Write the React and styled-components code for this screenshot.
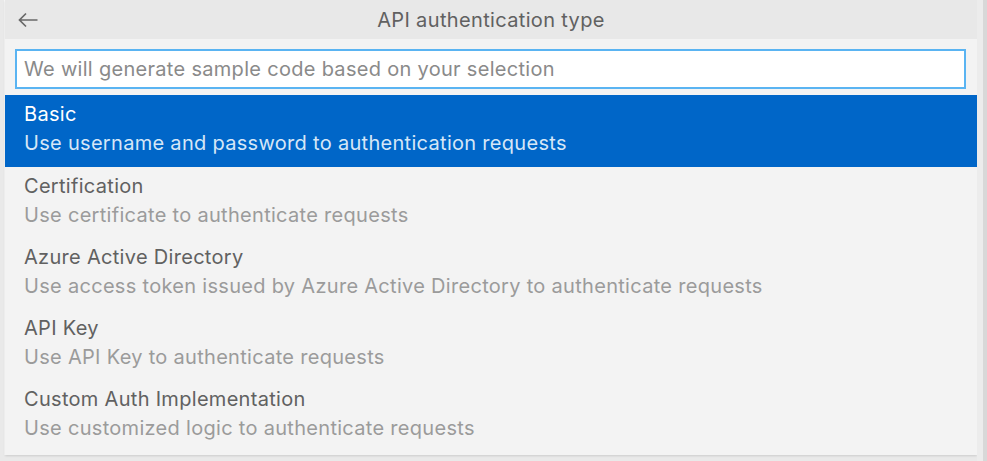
import React from "react";
import styled, { createGlobalStyle } from "styled-components";

const Global = createGlobalStyle`
  html, body {
    margin: 0;
    padding: 0;
    background: #e9e9e9;
  }
  body {
    font-family: Inter, "Liberation Sans", sans-serif;
  }
`;

/* Page: panel plus right gutter */
const Page = styled.div`
  display: flex;
  width: 987px;
  height: 461px;
  padding-left: 5px;
  box-sizing: border-box;
`;

const Panel = styled.div`
  width: 972px;
  height: 455px;
  background: #f3f3f3;
  box-shadow: 0 1px 2px rgba(0, 0, 0, 0.12), -1px 0 0 #f7f7f7;
  display: flex;
  flex-direction: column;
`;

const Gutter = styled.div`
  width: 10px;
  background: #ececec;
  border-right: 4px solid #d8d8d8;
  box-sizing: border-box;
`;

/* Title bar */
const TitleBar = styled.div`
  height: 39px;
  background: #e8e8e8;
  display: grid;
  grid-template-columns: 40px 1fr 40px;
  align-items: center;
`;

const Back = styled.div`
  display: flex;
  align-items: center;
  justify-content: center;
  padding-left: 5px;
`;

const Title = styled.div`
  text-align: center;
  font-size: 20px;
  color: #616161;
  letter-spacing: 0.35px;
`;

/* Input */
const InputWrap = styled.div`
  padding: 10px 11px 6px 10px;
`;

const Input = styled.input`
  width: 100%;
  height: 40px;
  box-sizing: border-box;
  border: 2px solid #5ab4f2;
  background: #fff;
  outline: none;
  padding: 0 7px;
  font-family: inherit;
  font-size: 20px;
  letter-spacing: 0.3px;
  color: #333;
  &::placeholder {
    color: #8a8a8a;
  }
`;

/* List */
const List = styled.div`
  display: flex;
  flex-direction: column;
`;

const Item = styled.div`
  height: 71px;
  box-sizing: border-box;
  padding: 5px 19px 0;
  background: ${p => (p.selected ? "#0066c8" : "transparent")};
  &:first-child {
    height: 72px;
  }
`;

const ItemTitle = styled.div`
  font-size: 20px;
  line-height: 28px;
  color: ${p => (p.selected ? "#ffffff" : "#616161")};
  letter-spacing: 0.3px;
`;

const ItemDesc = styled.div`
  font-size: 20px;
  line-height: 30px;
  color: ${p => (p.selected ? "#d6e6f7" : "#9b9b9b")};
  letter-spacing: 0.3px;
`;

const options = [
  { title: "Basic", desc: "Use username and password to authentication requests" },
  { title: "Certification", desc: "Use certificate to authenticate requests" },
  { title: "Azure Active Directory", desc: "Use access token issued by Azure Active Directory to authenticate requests" },
  { title: "API Key", desc: "Use API Key to authenticate requests" },
  { title: "Custom Auth Implementation", desc: "Use customized logic to authenticate requests" },
];

export default function App() {
  return (
    <>
      <Global />
      <Page>
        <Panel>
          <TitleBar>
            <Back>
              <svg width="20" height="16" viewBox="0 0 20 16" fill="none">
                <path d="M1.5 8H19.5M8 1.5L1.5 8L8 14.5" stroke="#686868" strokeWidth="1.7" />
              </svg>
            </Back>
            <Title>API authentication type</Title>
            <div />
          </TitleBar>

          <InputWrap>
            <Input placeholder="We will generate sample code based on your selection" />
          </InputWrap>

          <List>
            {options.map((o, i) => (
              <Item key={o.title} selected={i === 0}>
                <ItemTitle selected={i === 0}>{o.title}</ItemTitle>
                <ItemDesc selected={i === 0}>{o.desc}</ItemDesc>
              </Item>
            ))}
          </List>
        </Panel>
        <Gutter />
      </Page>
    </>
  );
}
